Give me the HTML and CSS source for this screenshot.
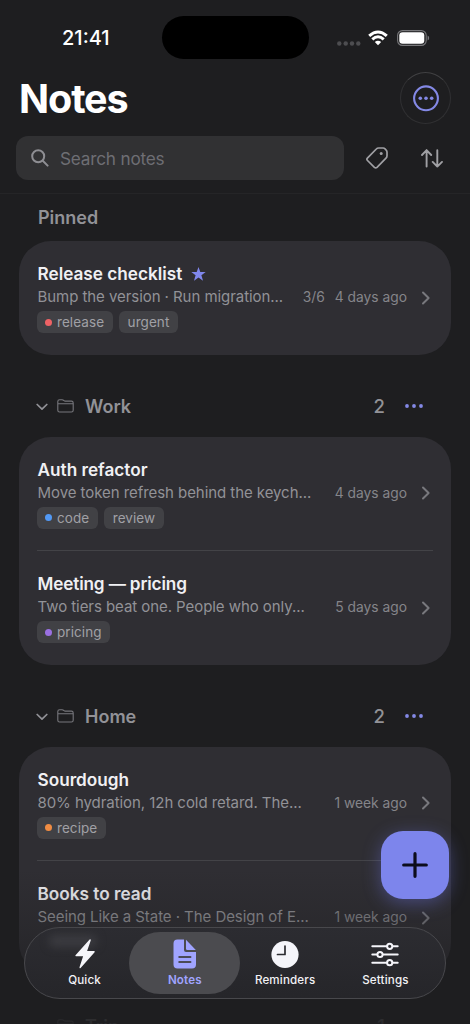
FILE: index.html
```html
<!DOCTYPE html>
<html lang="en">
<head>
<meta charset="utf-8">
<title>Notes</title>
<link rel="stylesheet" href="styles.css">
</head>
<body>
<svg class="defs" aria-hidden="true">
  <symbol id="chev-right" viewBox="0 0 10 16"><path d="M2 2.5 7.6 8 2 13.5" fill="none" stroke="currentColor" stroke-width="2" stroke-linecap="round" stroke-linejoin="round"/></symbol>
  <symbol id="chev-down" viewBox="0 0 12 8"><path d="M1.2 1.5 6 6.2 10.8 1.5" fill="none" stroke="currentColor" stroke-width="1.7" stroke-linecap="round" stroke-linejoin="round"/></symbol>
  <symbol id="folder" viewBox="0 0 17 14"><path d="M.8 11.2V2.6Q.8.8 2.6.8h2.6q.7 0 1.2.4l.6.5q.5.4 1.2.4h6.2q1.8 0 1.8 1.8v7.3q0 1.8-1.8 1.8H2.6Q.8 13 .8 11.2ZM.9 4.8h15.2" fill="none" stroke="currentColor" stroke-width="1.1" stroke-linejoin="round"/></symbol>
  <symbol id="dots" viewBox="0 0 18 4"><circle cx="2" cy="2" r="1.9" fill="currentColor"/><circle cx="9" cy="2" r="1.9" fill="currentColor"/><circle cx="16" cy="2" r="1.9" fill="currentColor"/></symbol>
</svg>
<div class="screen">
  <header class="top">
    <div class="status">
      <span class="time">21:41</span>
      <span class="island"></span>
      <div class="signals">
        <svg width="24" height="5" viewBox="0 0 24 5"><g fill="#4d4d50"><circle cx="2.3" cy="2.5" r="2.2"/><circle cx="8.7" cy="2.5" r="2.2"/><circle cx="15" cy="2.5" r="2.2"/><circle cx="21.3" cy="2.5" r="2.2"/></g></svg>
        <svg class="wifi" width="20" height="16" viewBox="0 0 20 16"><g fill="none" stroke="#fff" stroke-width="3"><path d="M1.2 5.8Q10-1.9 18.8 5.8"/><path d="M4.3 9.4Q10 4.2 15.7 9.4"/></g><path d="M6.8 12.1Q10 9.2 13.2 12.1L10 15.3Z" fill="#fff"/></svg>
        <svg class="battery" width="33" height="16" viewBox="0 0 33 16"><rect x=".6" y=".6" width="28.6" height="14.8" rx="4.8" fill="none" stroke="#77777a" stroke-width="1.1"/><rect x="2.3" y="2.3" width="25" height="11.4" rx="3.3" fill="#fff"/><path d="M30.6 5.5q1.6.8 1.6 2.5t-1.6 2.5Z" fill="#77777a"/></svg>
      </div>
    </div>
    <div class="heading">
      <h1>Notes</h1>
      <div class="more"><svg width="28" height="28" viewBox="0 0 28 28"><circle cx="14" cy="14.3" r="11.9" fill="none" stroke="#8489e6" stroke-width="2.1"/><g fill="#8489e6"><circle cx="8.3" cy="14.3" r="1.8"/><circle cx="14" cy="14.3" r="1.8"/><circle cx="19.7" cy="14.3" r="1.8"/></g></svg></div>
    </div>
    <div class="tools">
      <div class="search">
        <svg width="18" height="18" viewBox="0 0 18 18"><g fill="none" stroke="#8e8e93" stroke-width="2" stroke-linecap="round"><circle cx="7.2" cy="7.2" r="6"/><path d="m11.8 11.8 4.8 4.8"/></g></svg>
        <span>Search notes</span>
      </div>
      <svg class="tag-icon" width="22" height="22" viewBox="0 0 22 22"><path d="M1.4 11.1 10.3 2Q11.2 1 12.7 1H17.2Q18.2 1 19 1.8L20.2 3.2Q21 4 21 5.2V8.8Q21 10.2 20 11.2L11 20.4Q9.7 21.5 8.4 20.4L1.5 13.5Q.3 12.3 1.4 11.1Z" fill="none" stroke="#a0a0a4" stroke-width="1.7"/><circle cx="15.2" cy="6.4" r="1.5" fill="#a0a0a4"/></svg>
      <svg class="sort-icon" width="22" height="19" viewBox="0 0 22 19"><path d="M5.6 17.5V1.2M1 6l4.6-4.8L10.2 6M16.3 1.2v16.3M11.7 12.9l4.6 4.7 4.7-4.7" fill="none" stroke="#a0a0a4" stroke-width="1.9" stroke-linecap="round" stroke-linejoin="round"/></svg>
    </div>
  </header>

  <main>
    <h2 class="pinned">Pinned</h2>
    <section class="card">
      <article class="row">
        <h3>Release checklist <svg class="star" width="15" height="14" viewBox="0 0 15 14"><path d="m7.5 0 1.8 5h5.4L10.4 8.2 12 13.7 7.5 10.4 3 13.7 4.6 8.2.3 5h5.4Z" fill="#8087ec"/></svg></h3>
        <div class="line"><p>Bump the version · Run migration...</p><span class="count">3/6</span><time>4 days ago</time><svg class="go"><use href="#chev-right"/></svg></div>
        <div class="tags"><span class="tag"><i class="dot red"></i>release</span><span class="tag">urgent</span></div>
      </article>
    </section>

    <div class="group"><svg class="down"><use href="#chev-down"/></svg><svg class="folder"><use href="#folder"/></svg><h2>Work</h2><b>2</b><svg class="dots"><use href="#dots"/></svg></div>
    <section class="card">
      <article class="row">
        <h3>Auth refactor</h3>
        <div class="line"><p>Move token refresh behind the keych...</p><time>4 days ago</time><svg class="go"><use href="#chev-right"/></svg></div>
        <div class="tags"><span class="tag"><i class="dot blue"></i>code</span><span class="tag">review</span></div>
      </article>
      <article class="row">
        <h3 class="snug">Meeting — pricing</h3>
        <div class="line"><p>Two tiers beat one. People who only...</p><time>5 days ago</time><svg class="go"><use href="#chev-right"/></svg></div>
        <div class="tags"><span class="tag"><i class="dot purple"></i>pricing</span></div>
      </article>
    </section>

    <div class="group"><svg class="down"><use href="#chev-down"/></svg><svg class="folder"><use href="#folder"/></svg><h2>Home</h2><b>2</b><svg class="dots"><use href="#dots"/></svg></div>
    <section class="card">
      <article class="row">
        <h3>Sourdough</h3>
        <div class="line"><p>80% hydration, 12h cold retard. The...</p><time>1 week ago</time><svg class="go"><use href="#chev-right"/></svg></div>
        <div class="tags"><span class="tag"><i class="dot orange"></i>recipe</span></div>
      </article>
      <article class="row">
        <h3>Books to read</h3>
        <div class="line"><p>Seeing Like a State · The Design of E...</p><time>1 week ago</time><svg class="go"><use href="#chev-right"/></svg></div>
      </article>
    </section>
    <div class="group"><svg class="down"><use href="#chev-down"/></svg><svg class="folder"><use href="#folder"/></svg><h2>Trip</h2><b>1</b><svg class="dots"></svg></div>
  </main>

  <div class="fade"></div>
  <button class="add" aria-label="New note"><svg width="26" height="26" viewBox="0 0 26 26"><path d="M13 1.7v22.6M1.7 13h22.6" stroke="#0c0d1c" stroke-width="3.2" stroke-linecap="round"/></svg></button>
  <nav class="tabs">
    <span class="ghost"></span>
    <a class="tab"><svg width="22" height="32" viewBox="0 0 22 32"><path d="M15.6 1.5 1.5 17.2q-.6 1 .6 1.1h7L5.5 29.3q-.1 1.5 1.1.6L20.6 14.2q.6-1.1-.6-1.2h-6.9l3.7-10.8q0-1.4-1.2-.7Z" fill="#f5f5fa"/></svg><span>Quick</span></a>
    <a class="tab on"><svg width="24" height="32" viewBox="0 0 24 32"><path d="M4.5 1.5H11V12q0 2 2 2h10v12.5q0 4-4 4H4.5q-4 0-4-4V5.5q0-4 4-4Z" fill="#a0a4ff"/><path d="M13 1.8 22.8 12H14.2q-1.2 0-1.2-1.2Z" fill="#a0a4ff"/><path d="M6.2 19h11.3M6.2 24h11.3" stroke="#4b4b57" stroke-width="1.9" stroke-linecap="round"/></svg><span>Notes</span></a>
    <a class="tab"><svg width="28" height="32" viewBox="0 0 28 32"><circle cx="14" cy="16.5" r="13.6" fill="#f5f5fa"/><path d="M14 8V16.5H6.5" fill="none" stroke="#2c2c31" stroke-width="1.7" stroke-linecap="round" stroke-linejoin="round"/></svg><span>Reminders</span></a>
    <a class="tab"><svg width="28" height="32" viewBox="0 0 28 32"><g stroke="#f5f5fa" stroke-width="2" stroke-linecap="round" fill="#2b2b30"><path d="M1.3 8.3h25.4M1.3 16.5h25.4M1.3 24.7h25.4"/><circle cx="18.7" cy="8.3" r="2.6"/><circle cx="9" cy="16.5" r="2.6"/><circle cx="18.7" cy="24.7" r="2.6"/></g></svg><span>Settings</span></a>
  </nav>
</div>
</body>
</html>
```
FILE: styles.css
```css
* { box-sizing: border-box; }
html, body { margin: 0; background: #1e1e20; }
body { font-family: Inter, "Liberation Sans", sans-serif; color: #f0f0f3; }
h1, h2, h3, p { margin: 0; }
svg { display: block; flex: none; }
.defs { position: absolute; width: 0; height: 0; }
.screen { position: relative; width: 470px; height: 1024px; overflow: hidden; background: #1e1e20; }

.top { height: 194px; border-bottom: 1px solid #252527; }
.status { height: 72px; padding-top: 16px; display: flex; align-items: flex-start; }
.time { width: 162px; padding-left: 62px; font-size: 20px; font-weight: 500; line-height: 45px; color: #fff; }
.island { width: 147px; height: 43px; border-radius: 22px; background: #000; }
.signals { display: flex; align-items: center; height: 44px; padding-left: 28px; }
.signals > svg:first-child { margin-top: 10px; }
.wifi { margin-left: 7px; }
.battery { margin-left: 9px; }
.heading { height: 64px; display: flex; justify-content: space-between; padding: 0 19px 0 19px; }
h1 { font-size: 39.5px; line-height: 54px; font-weight: 700; color: #fff; letter-spacing: -1.1px; }
.more { width: 51px; height: 52px; border-radius: 50%; border: 1px solid #303032; border-top-color: #414143; display: grid; place-items: center; }
.tools { display: flex; align-items: center; padding: 0 27px 0 16px; height: 44px; }
.search { width: 328px; height: 44px; border-radius: 12px; background: #313133; display: flex; align-items: center; gap: 11px; padding-left: 15px; margin-right: 21.5px; font-size: 17.2px; letter-spacing: -.2px; color: #6e6e73; }
.sort-icon { margin-left: 33px; }

.pinned { height: 47px; padding-left: 38px; line-height: 47px; }
h2 { font-size: 18px; font-weight: 600; color: #929297; }
.card { margin: 0 19px; padding: 0 18px; border-radius: 32px; background: #2f2e33; }
.row { height: 114.5px; padding-top: 22px; border-top: 1px solid #434347; }
.row:first-child { height: 113.5px; padding-top: 21px; border-top-color: transparent; }
h3 { height: 22px; display: flex; align-items: center; gap: 9px; font-size: 17.2px; font-weight: 600; line-height: 22px; color: #f0f0f3; padding-left: .5px; }
.snug { letter-spacing: -.15px; }
.line { height: 25px; padding: 0 0 1px .5px; display: flex; align-items: center; font-size: 15px; line-height: 24px; color: #929297; white-space: nowrap; }
.line p { flex: 1; letter-spacing: -.06px; }
time, .count { font-size: 13.8px; color: #85858a; }
.count { margin-right: 10px; }
.go { width: 10px; height: 16px; margin: 1px 2px 0 14px; color: #78787d; }
.tags { display: flex; gap: 6px; padding-top: 1px; }
.tag { height: 22px; display: flex; align-items: center; padding: 0 8.5px 0 9px; border-radius: 6px; background: #414145; color: #a0a0a5; font-size: 13.5px; letter-spacing: .07px; }
.dot { width: 7px; height: 7px; border-radius: 50%; margin: 0 5px 0 -1px; }
.red { background: #ee6265; }
.blue { background: #5299f5; }
.purple { background: #9a70e2; }
.orange { background: #f08c43; }
.group { height: 82px; display: flex; align-items: center; padding: 21px 47px 0 36px; color: #929297; }
.down { width: 12px; height: 8px; margin-top: 2px; }
.folder { width: 17px; height: 14px; margin: 0 11px 0 9px; color: #77777c; }
.group h2 { flex: 1; }
.group b { font-size: 18.5px; font-weight: 500; }
.dots { width: 18px; height: 4px; margin-left: 20px; color: #8489e6; }

.fade { position: absolute; inset: 870px 0 0; background: linear-gradient(transparent, rgba(30,30,32,.3) 40%, rgba(30,30,32,.9)); }
.add { position: absolute; left: 381px; top: 830.5px; width: 68px; height: 68px; border: 0; padding: 0; border-radius: 22px; background: #7d85ec; display: grid; place-items: center; box-shadow: 0 4px 18px rgba(112,120,235,.4); }
.tabs { position: absolute; left: 24px; top: 927px; width: 422px; height: 72px; border: 1px solid #48484c; border-radius: 36px; padding: 4px; display: flex; background: linear-gradient(rgba(44,44,49,.97), rgba(38,38,42,.97)); }
.ghost { position: absolute; left: 24px; top: 7px; width: 48px; height: 12px; border-radius: 5px; background: #3b3b40; filter: blur(4px); }
.tab { position: relative; width: 111px; margin-right: -10.7px; height: 62px; border-radius: 31px; display: flex; flex-direction: column; align-items: center; padding-top: 6px; font-size: 11.6px; font-weight: 500; line-height: 17px; color: #f2f2f5; letter-spacing: .15px; }
.tab svg { margin-bottom: 2px; }
.on { background: #4b4b4f; color: #a0a4ff; font-weight: 600; }
```
